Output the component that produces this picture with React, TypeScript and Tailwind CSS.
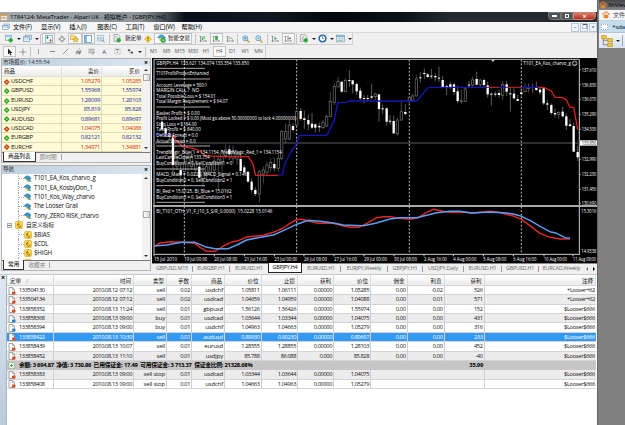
import type { ReactNode } from "react";

/* ---------- icons ---------- */

type IconName =
  | "newChart" | "profiles" | "market" | "crosshair" | "data" | "navigator" | "tester"
  | "order" | "warning" | "expert" | "bars" | "candles" | "line" | "zoomIn" | "zoomOut"
  | "scroll" | "shift" | "indicators" | "clock" | "template" | "cursor" | "cross"
  | "vline" | "hline" | "trend" | "channel" | "fibo" | "text" | "label" | "arrows"
  | "ea" | "fx" | "app" | "sell" | "buy" | "balance" | "paw" | "tree";

const plus = <path d="M10 7v8M6 11h8" stroke="#1faa2c" strokeWidth="3.4" />;
const axes = <path d="M3 2v12M1 12h14M1 4l2-2 2 2M13 10l2 2-2 2" stroke="#555" />;

const glyphs: Record<IconName, ReactNode> = {
  newChart: <><rect x="1" y="2" width="11" height="9" fill="#e8f2fa" stroke="#6d94b0" /><path d="M2 4h9" stroke="#8ab0cb" strokeWidth="2" />{plus}</>,
  profiles: <><rect x="4" y="2" width="11" height="8" fill="#d5e7f5" stroke="#5c88ac" /><rect x="1" y="5" width="11" height="8" fill="#c4dcf0" stroke="#5c88ac" /><path d="M2 11h9" stroke="#f7fbff" strokeWidth="2" /></>,
  market: <><rect x="1" y="1" width="14" height="14" fill="#f2faff" stroke="#6fa5cc" strokeWidth="1.5" /><path d="M5 3v5M3 5l2-2 2 2" stroke="#15a32b" strokeWidth="2" /><path d="M11 8v5M9 11l2 2 2-2" stroke="#d35a20" strokeWidth="2" /></>,
  crosshair: <><circle cx="8" cy="8" r="4.5" stroke="#666" /><path d="M8 1v5M8 10v5M1 8h5M10 8h5" stroke="#666" strokeWidth="1.4" /></>,
  data: <><path d="M1 2h5l1 2h4v6H1z" fill="#ffe28a" stroke="#c0962c" /><path d="M10 5l1.600 3.200 3.400.4-2.500 2.300.7 3.500-3.200-1.800-3.200 1.800.7-3.500L5 8.600l3.400-.4z" fill="#ffd23b" stroke="#b98c1c" /></>,
  navigator: <><rect x="1" y="1" width="14" height="14" fill="#fff" stroke="#4e93cd" strokeWidth="1.6" /><path d="M4 1v14" stroke="#63a6dc" strokeWidth="3" /></>,
  tester: <><rect x="1" y="1" width="12" height="11" fill="#eaf3fa" stroke="#7ea3bf" /><path d="M3 9V5M6 9V3M9 9V5" stroke="#6389a6" /><circle cx="10" cy="9" r="3" fill="#d9edfb" stroke="#5e8db3" /><path d="M12 11l3 4" stroke="#b98b3c" strokeWidth="2" /></>,
  order: <><path d="M2 1h7l3 3v9H2z" fill="#fff" stroke="#666" /><path d="M4 5h5M4 7h5" stroke="#888" />{plus}</>,
  warning: <><path d="M8 1l7 7-7 7-7-7z" fill="#ffd640" stroke="#c59312" /><path d="M8 4v5M8 10.5v2" stroke="#604600" strokeWidth="1.8" /></>,
  expert: <><path d="M1 6q7-9 14 0l-4 2H5z" fill="#4aa3d8" stroke="#2f7ba9" /><path d="M4 7h8v4q-4 4-8 0z" fill="#f3cf5a" /><circle cx="11" cy="11" r="4.5" fill="#22a833" /><path d="M10 9l3 2-3 2z" fill="#fff" /></>,
  bars: <>{axes}<path d="M7 4v6M10 2v7M10 4h2M7 8H5" stroke="#17a028" strokeWidth="1.5" /></>,
  candles: <>{axes}<path d="M9 1v10" stroke="#139423" /><rect x="7" y="3" width="4" height="6" fill="#20b534" stroke="#139423" /></>,
  line: <>{axes}<path d="M4 9q3-7 6-3t4 2" stroke="#2ba43a" strokeWidth="1.3" /></>,
  zoomIn: <><circle cx="6.5" cy="6.5" r="5" fill="#dff0fb" stroke="#4c8dc0" strokeWidth="1.6" /><path d="M4 6.5h5M6.5 4v5" stroke="#2c73ac" strokeWidth="1.5" /><path d="M10 10l5 5" stroke="#c99a2e" strokeWidth="2.6" /></>,
  zoomOut: <><circle cx="6.5" cy="6.5" r="5" fill="#dff0fb" stroke="#4c8dc0" strokeWidth="1.6" /><path d="M4 6.5h5" stroke="#2c73ac" strokeWidth="1.5" /><path d="M10 10l5 5" stroke="#c99a2e" strokeWidth="2.6" /></>,
  scroll: <>{axes}<path d="M7 4l5 3-5 3z" fill="#22a833" /></>,
  shift: <>{axes}<path d="M8 1v10" stroke="#555" strokeWidth="1.4" /><path d="M13 4L9 7l4 2z" fill="#444" /></>,
  indicators: <><path d="M1 1h8l3 3v9H1z" fill="#f5f5f5" stroke="#777" /><path d="M4 10q1-7 4-6" stroke="#555" />{plus}</>,
  clock: <><circle cx="8" cy="8" r="6" fill="#fff" stroke="#2468ab" strokeWidth="2.6" /><path d="M8 4v4h3" stroke="#333" /></>,
  template: <><rect x="1" y="2" width="14" height="12" fill="#e5f0f8" stroke="#5e8db0" /><path d="M1 4h14" stroke="#5d9bc9" strokeWidth="2" /><path d="M3 9l3-2 3 2 4-2" stroke="#7d93a3" /><path d="M3 12l3-1 3 1 4-2" stroke="#39a04a" /></>,
  cursor: <path d="M4 1v12l3-3 2 5 2-1-2-4h4z" fill="#222" />,
  cross: <path d="M8 1v14M1 8h14" stroke="#555" />,
  vline: <path d="M8 2v12" stroke="#666" strokeWidth="1.3" />,
  hline: <path d="M2 8h12" stroke="#555" strokeWidth="1.5" />,
  trend: <path d="M2 14L14 2" stroke="#555" strokeWidth="1.3" />,
  channel: <path d="M1 12L11 1M4 15L15 4M3 8h11M2 11h9M10 10v5M10 10h4M10 12h3" stroke="#555" strokeWidth="1.2" />,
  fibo: <path d="M1 3h14M1 7h14M1 11h8M11 10v5M11 10h4M11 12h3" stroke="#666" strokeWidth="1.3" />,
  text: <text x="3" y="13" fontSize="14" fill="#444">A</text>,
  label: <><rect x="2" y="2" width="12" height="12" stroke="#888" strokeDasharray="2 1" /><text x="4.500" y="12.500" fontSize="11" fill="#444">T</text></>,
  arrows: <><path d="M1 5l4-3 3 4-3 1z" fill="#333" /><path d="M8 9l6-1-2 6z" fill="#333" /><path d="M4 8l5 4" stroke="#333" /></>,
  ea: <><path d="M4 7h9v4q-4 4-8 1z" fill="#e7bd45" /><path d="M0 6q7-9 14 0l-3 4-6-2z" fill="#3c98cc" stroke="#2b7299" /><path d="M9 8l6 6-6-1z" fill="#2b88b8" /></>,
  fx: <><rect x="1" y="1" width="14" height="14" rx="2" fill="#ffd94e" stroke="#c99713" /><path d="M9 3q-3 0-3 4v6M4 7h5M8 9l5 5M13 9l-5 5" stroke="#7b5800" strokeWidth="1.3" /></>,
  app: <><rect x="1" y="3" width="14" height="12" fill="#f6ead8" stroke="#c48b55" /><path d="M1 4h14" stroke="#d48f4b" strokeWidth="3" /><path d="M4 12V8M8 12V7M12 12V9" stroke="#7d8f9c" strokeWidth="1.6" /></>,
  sell: <><path d="M2 1h7l4 4v10H2z" fill="#fff" stroke="#777" strokeWidth="1.3" /><path d="M9 1v4h4" stroke="#777" /><rect x="8" y="9" width="7" height="6" rx="2" fill="#dd4b25" /></>,
  buy: <><path d="M2 1h7l4 4v10H2z" fill="#fff" stroke="#777" strokeWidth="1.3" /><path d="M9 1v4h4" stroke="#777" /><rect x="8" y="9" width="7" height="6" rx="2" fill="#2d83c9" /></>,
  balance: <><path d="M2 1h9l3 3v11H2z" fill="#f5fff5" stroke="#6b8b6b" /><path d="M8 5v6M5 8h6" stroke="#1f9f2d" strokeWidth="2.4" /></>,
  paw: <><ellipse cx="8" cy="11" rx="5" ry="4" fill="#e8852a" /><path d="M2 4l1 4M6 1v4M10 1v4M14 4l-1 4" stroke="#e8852a" strokeWidth="2.6" /></>,
  tree: <><path d="M3 5v8h6M3 7h6" stroke="#666" /><rect x="1" y="1" width="6" height="4" fill="#f4ce42" stroke="#b98d17" /><rect x="9" y="5" width="6" height="4" fill="#f4ce42" stroke="#b98d17" /><rect x="9" y="11" width="6" height="4" fill="#f4ce42" stroke="#b98d17" /></>,
};

function Icon({ name, className = "size-[8px]" }: { name: IconName; className?: string }) {
  return (
    <svg viewBox="0 0 16 16" fill="none" className={`shrink-0 ${className}`}>
      {glyphs[name]}
    </svg>
  );
}

function Cell({ children, on, className = "w-[13.2px]" }: { children: ReactNode; on?: boolean; className?: string }) {
  return (
    <div
      className={`flex h-[11px] shrink-0 items-center justify-center ${className} ${
        on ? "border border-[#c3c3c3] bg-[#fafafa]" : ""
      }`}
    >
      {children}
    </div>
  );
}

function Caret() {
  return (
    <div className="flex w-[5px] shrink-0 justify-center">
      <i className="size-0 border-x-2 border-t-2 border-x-transparent border-t-[#222]" />
    </div>
  );
}

function Sep() {
  return <div className="mx-px h-[10px] w-px shrink-0 bg-[#c4c4c4]" />;
}

/* ---------- title, menu and toolbars ---------- */

function TitleBar() {
  return (
    <div className="flex h-[10px] items-start bg-[linear-gradient(90deg,#a3aaae_0,#8d9499_140px,#4a5259_165px,#071018_185px,#101922_270px,#02070c_330px,#0a1118_400px,#242a30_450px)]">
      <Icon name="app" className="mt-px size-[8px]" />
      <span className="ml-[2px] w-[160px] text-[6px] leading-[10px] tracking-[-0.060px] whitespace-nowrap text-black">
        1784124: MetaTrader - Alpari UK - 模拟帐户 - [GBPJPY,H4]
      </span>
      <div className="mr-px ml-auto flex h-[8px] text-white">
        <span className="flex w-[13px] items-center justify-center rounded-bl-sm border border-[#777] bg-[#4e5357]"><i className="h-[2px] w-[5px] bg-white" /></span>
        <span className="flex w-[12px] items-center justify-center border border-[#777] bg-[#4e5357]"><i className="size-[4px] border border-white" /></span>
        <span className="flex w-[23px] items-center justify-center rounded-br-sm border border-[#c68278] bg-linear-to-b from-[#d87e6d] to-[#b92b12] text-[7px] leading-none font-bold">×</span>
      </div>
    </div>
  );
}

const menus = ["文件(F)", "显示(V)", "插入(I)", "图表(C)", "工具(T)", "窗口(W)", "帮助(H)"];

function MenuBar() {
  return (
    <div className="flex h-[11px] items-center border-b border-[#d9d9d9] bg-[#f5f5f5]">
      <Icon name="profiles" className="ml-[2px] size-[8px]" />
      <div className="ml-[3px] flex text-[6.200px] leading-none text-black">
        {menus.map((m) => (
          <span key={m} className="w-[28.100px] tracking-[-0.100px] whitespace-nowrap">
            {m}
          </span>
        ))}
      </div>
      <div className="ml-auto flex gap-px">
        {["–", "❐", "×"].map((g) => (
          <span key={g} className="flex h-[9px] w-[8px] items-center justify-center border border-[#b6c9da] bg-[#eef6fc] text-[6px] leading-none text-[#335]">
            {g}
          </span>
        ))}
      </div>
    </div>
  );
}

function StandardBar() {
  return (
    <div className="flex h-[12px] w-[353px] items-center border-r border-b border-[#cfcfcf] pl-[3px]">
      <Cell className="w-[13px]"><Icon name="newChart" className="size-[9px]" /></Cell>
      <Caret />
      <Cell className="w-[13px]"><Icon name="profiles" className="size-[9px]" /></Cell>
      <Caret />
      <Sep />
      <Cell on><Icon name="market" /></Cell>
      <Cell><Icon name="crosshair" /></Cell>
      <Cell on><Icon name="data" className="size-[9px]" /></Cell>
      <Cell on><Icon name="navigator" /></Cell>
      <Cell><Icon name="tester" /></Cell>
      <Sep />
      <Cell className="w-[14px]"><Icon name="order" className="size-[9px]" /></Cell>
      <span className="w-[17px] text-[5.500px] whitespace-nowrap text-black">新定单</span>
      <Cell className="w-[13px]"><Icon name="warning" className="size-[8px]" /></Cell>
      <Cell on className="w-[38px] gap-[2px]">
        <Icon name="expert" className="size-[9px]" />
        <span className="text-[5.500px] whitespace-nowrap text-black">智能交易</span>
      </Cell>
      <div className="w-[2px]" />
      <Sep />
      <Cell className="w-[13px]"><Icon name="bars" /></Cell>
      <Cell on><Icon name="candles" /></Cell>
      <Cell><Icon name="line" /></Cell>
      <Sep />
      <Cell><Icon name="zoomIn" /></Cell>
      <Cell><Icon name="zoomOut" /></Cell>
      <Sep />
      <Cell><Icon name="scroll" /></Cell>
      <Cell on><Icon name="shift" /></Cell>
      <Sep />
      <Cell className="w-[13px]"><Icon name="indicators" className="size-[9px]" /></Cell>
      <Caret />
      <Cell className="w-[13px]"><Icon name="clock" className="size-[9px]" /></Cell>
      <Caret />
      <Cell className="w-[13px]"><Icon name="template" className="size-[9px]" /></Cell>
      <Caret />
    </div>
  );
}

const tools: IconName[] = ["vline", "hline", "trend", "channel", "fibo", "text", "label", "arrows"];
const periods = ["M1", "M5", "M15", "M30", "H1", "H4", "D1", "W1", "MN"];

function LineBar() {
  return (
    <div className="flex h-[13px] w-[266px] items-center border-r border-[#cfcfcf] pl-[3px]">
      <Cell on><Icon name="cursor" /></Cell>
      <Cell><Icon name="cross" /></Cell>
      <Sep />
      {tools.map((t) => (
        <Cell key={t} className="w-[13.100px]"><Icon name={t} className="size-[7px]" /></Cell>
      ))}
      <Caret />
      <div className="w-[2px]" />
      <Sep />
      {periods.map((p) => (
        <Cell key={p} on={p === "H4"} className="w-[13.100px]">
          <span className="text-[5.200px] tracking-[-0.150px] text-[#555]">{p}</span>
        </Cell>
      ))}
    </div>
  );
}

/* ---------- left column ---------- */

function PanelTitle({ children }: { children: ReactNode }) {
  return (
    <div className="flex h-[8px] items-center justify-between bg-linear-to-r from-[#bfd0e0] to-[#dbe6f0] pr-[2px] pl-[1px] text-[5.600px] leading-none text-[#333]">
      <span className="tracking-[-0.050px]">{children}</span>
      <span className="text-[7px] font-bold text-black">×</span>
    </div>
  );
}

function ScrollBar({ thumb }: { thumb: string }) {
  return (
    <div className="flex w-[8px] shrink-0 flex-col items-center bg-[#f2f2f2] py-[3px]">
      <i className="size-0 border-x-2 border-b-2 border-x-transparent border-b-[#333]" />
      <div className={`h-[7px] w-[7px] border border-[#aaa] bg-linear-to-r from-white to-[#d8d8d8] ${thumb}`} />
      <i className="mt-auto size-0 border-x-2 border-t-2 border-x-transparent border-t-[#333]" />
    </div>
  );
}

function PanelTabs({ items }: { items: [string, string] }) {
  return (
    <div className="flex h-[10px] items-start border-t border-[#777] bg-[#f1f1f1] text-[5.700px] leading-[9px]">
      <span className="-mt-px ml-[1px] h-[10px] border-r border-b border-l border-[#333] bg-white px-[4px] text-black">{items[0]}</span>
      <span className="px-[4px] text-[#888]">{items[1]}</span>
      <span className="mt-px h-[6px] w-px bg-[#aaa]" />
    </div>
  );
}

const quotes = [
  { symbol: "USDCHF", bid: "1.05279", ask: "1.05285", up: false },
  { symbol: "GBPUSD", bid: "1.55968", ask: "1.55974", up: true },
  { symbol: "EURUSD", bid: "1.28099", ask: "1.28103", up: true },
  { symbol: "USDJPY", bid: "85.819", ask: "85.828", up: true },
  { symbol: "AUDUSD", bid: "0.89681", ask: "0.89697", up: true },
  { symbol: "USDCAD", bid: "1.04075", ask: "1.04088", up: false },
  { symbol: "EURGBP", bid: "0.82121", ask: "0.82132", up: true },
  { symbol: "EURCHF", bid: "1.34871", ask: "1.34881", up: false },
];

function MarketWatch() {
  return (
    <div className="flex h-[105px] flex-col border border-[#b5b5b5] bg-white">
      <PanelTitle>市场报价: 14:55:54</PanelTitle>
      <div className="flex h-[86px]">
        <div className="flex-1">
          <div className="grid h-[11px] grid-cols-[59px_40px_1fr] items-center border-b border-[#ddd] bg-linear-to-b from-white to-[#ececec] text-[5.500px] text-[#111]">
            <span className="pl-[2px]">商品</span>
            <span className="border-l border-[#ddd] pr-[2px] text-right">卖价</span>
            <span className="border-l border-[#ddd] pr-[2px] text-right">买价</span>
          </div>
          {quotes.map((q) => (
            <div key={q.symbol} className="grid h-[9.360px] grid-cols-[59px_40px_1fr] border-b border-[#dcd9b8] bg-[#fffbd6] text-[6px] leading-[9px]">
              <span className="flex items-center gap-[3px] pl-[2.500px] tracking-[-0.250px] text-[#111]">
                <i className={`size-[3.500px] rotate-45 border ${q.up ? "border-[#2a9b2a] bg-[#7ddb70]" : "border-[#c23c18] bg-[#f29456]"}`} />
                {q.symbol}
              </span>
              <span className={`border-l border-[#dcd9b8] pr-[1px] text-right tracking-[-0.400px] ${q.up ? "text-[#1b2ca0]" : "text-[#d2301a]"}`}>{q.bid}</span>
              <span className={`border-l border-[#dcd9b8] pr-[1px] text-right tracking-[-0.400px] ${q.up ? "text-[#1b2ca0]" : "text-[#d2301a]"}`}>{q.ask}</span>
            </div>
          ))}
        </div>
        <ScrollBar thumb="mt-[3px]" />
      </div>
      <PanelTabs items={["商品列表", "即时图"]} />
    </div>
  );
}

const experts = ["T101_EA_Kos_charvo_g", "T101_EA_KosbyDon_1", "T101_Kos_Way_charvo", "The Looser Grail", "Tony_ZERO RISK_charvo"];
const customs = ["$BIAS", "$CDL", "$HIGH", "$LOW"];

function TreeRow({ icon, children }: { icon: IconName; children: ReactNode }) {
  return (
    <div className="ml-[16px] flex h-[9.360px] items-center border-l border-dotted border-[#aaa]">
      <i className="w-[5px] border-t border-dotted border-[#aaa]" />
      <Icon name={icon} />
      <span className="ml-[2px] text-[6.200px] leading-none tracking-[-0.200px] whitespace-nowrap">{children}</span>
    </div>
  );
}

function Navigator() {
  return (
    <div className="flex h-[106px] flex-col border border-[#b5b5b5] bg-white text-[#111]">
      <PanelTitle>导航</PanelTitle>
      <div className="flex h-[88px] overflow-hidden">
        <div className="flex-1 overflow-hidden">
          {experts.map((e) => (
            <TreeRow key={e} icon="ea">{e}</TreeRow>
          ))}
          <div className="flex h-[9.360px] items-center pl-[5px]">
            <i className="mr-[3px] flex size-[5px] items-center justify-center border border-[#aaa] bg-white"><b className="h-px w-[3px] bg-[#777]" /></i>
            <Icon name="fx" />
            <span className="ml-[3px] text-[5.600px] leading-none">自定义指标</span>
          </div>
          {customs.map((c) => (
            <TreeRow key={c} icon="fx">{c}</TreeRow>
          ))}
        </div>
        <ScrollBar thumb="mt-[32px]" />
      </div>
      <PanelTabs items={["常用", "收藏夹"]} />
    </div>
  );
}

/* ---------- chart, drawn on a grid of three units per pixel ---------- */

// x, high, low, body top, body bottom, bear (1) or bull (0)
const candles = [
  [36, 190, 225, 200, 222, 1], [47, 210, 245, 220, 240, 1], [58, 225, 260, 235, 245, 1], [69, 240, 352, 240, 330, 1],
  [81, 300, 345, 318, 334, 0], [92, 330, 385, 345, 360, 1], [103, 300, 380, 326, 350, 0], [114, 285, 350, 300, 330, 0],
  [125, 285, 345, 303, 335, 0], [137, 315, 358, 325, 345, 0], [148, 325, 370, 335, 368, 1], [159, 330, 395, 350, 372, 0],
  [170, 320, 380, 335, 355, 0], [181, 320, 360, 328, 352, 0], [193, 305, 370, 318, 345, 0], [205, 300, 400, 312, 324, 0],
  [216, 283, 350, 290, 320, 0], [227, 268, 310, 285, 302, 0], [238, 270, 315, 283, 298, 1], [249, 272, 325, 290, 310, 0],
  [261, 285, 330, 298, 312, 0], [272, 295, 350, 312, 348, 1], [283, 330, 355, 337, 352, 1], [294, 350, 383, 350, 380, 1],
  [305, 370, 413, 380, 405, 1], [316, 397, 423, 405, 417, 1], [328, 345, 442, 350, 417, 0], [340, 335, 385, 345, 357, 0],
  [351, 320, 360, 330, 352, 0], [362, 310, 350, 322, 338, 0], [373, 310, 350, 327, 340, 1], [385, 298, 350, 310, 340, 0],
  [395, 225, 315, 230, 310, 0], [407, 205, 265, 230, 252, 0], [418, 195, 255, 210, 252, 0], [429, 205, 230, 213, 225, 1],
  [440, 165, 212, 170, 210, 0], [452, 160, 197, 168, 192, 1], [463, 167, 222, 190, 195, 1], [475, 178, 225, 195, 208, 1],
  [486, 174, 222, 206, 218, 1], [496, 205, 232, 208, 218, 1], [508, 203, 231, 213, 217, 1], [519, 195, 222, 203, 218, 0],
  [530, 179, 216, 185, 213, 0], [541, 110, 186, 139, 185, 0], [553, 85, 150, 94, 142, 0], [564, 66, 96, 80, 96, 0],
  [575, 80, 113, 80, 110, 1], [586, 70, 112, 76, 110, 0], [598, 45, 96, 75, 78, 1], [608, 75, 115, 76, 88, 1],
  [620, 83, 120, 87, 109, 1], [631, 98, 137, 107, 130, 1], [642, 120, 145, 129, 132, 1], [653, 120, 138, 129, 132, 1],
  [665, 86, 133, 124, 128, 1], [676, 113, 135, 117, 125, 0], [687, 118, 200, 118, 162, 1], [698, 148, 176, 160, 163, 1],
  [710, 158, 212, 160, 200, 1], [720, 180, 210, 197, 200, 1], [731, 182, 237, 198, 235, 1], [742, 188, 243, 195, 236, 0],
  [754, 139, 197, 170, 195, 0], [766, 148, 180, 171, 177, 1], [778, 125, 150, 127, 139, 0], [788, 116, 137, 123, 137, 0],
  [799, 61, 123, 72, 123, 0], [811, 52, 83, 67, 70, 1], [823, 40, 72, 54, 57, 1], [833, 53, 68, 58, 66, 1],
  [844, 42, 72, 62, 65, 1], [856, 55, 78, 63, 67, 1], [867, 35, 81, 68, 71, 1], [878, 63, 100, 75, 97, 1],
  [890, 90, 120, 93, 96, 1], [901, 81, 102, 88, 98, 1], [912, 83, 120, 88, 111, 1], [923, 92, 145, 109, 138, 1],
  [934, 105, 148, 137, 140, 0], [946, 98, 140, 102, 139, 0], [957, 78, 97, 89, 92, 1], [968, 65, 97, 75, 90, 0],
  [980, 50, 90, 72, 89, 1], [991, 72, 97, 75, 88, 0], [1002, 70, 95, 75, 90, 1], [1013, 80, 128, 91, 118, 1],
  [1024, 112, 152, 116, 119, 1], [1036, 110, 125, 116, 119, 1], [1047, 105, 128, 114, 120, 1], [1058, 78, 135, 88, 121, 0],
  [1070, 78, 123, 88, 110, 1], [1081, 97, 170, 115, 118, 1], [1092, 100, 133, 116, 130, 1], [1103, 120, 138, 132, 138, 1],
  [1114, 96, 122, 112, 117, 1], [1125, 85, 112, 98, 110, 0], [1136, 85, 113, 97, 100, 0], [1148, 86, 113, 96, 99, 1],
  [1159, 80, 108, 98, 105, 1], [1170, 98, 120, 104, 112, 1], [1181, 98, 150, 100, 145, 1], [1192, 135, 165, 145, 149, 1],
  [1204, 145, 180, 150, 174, 1], [1215, 160, 187, 174, 178, 1], [1226, 168, 192, 172, 178, 0], [1238, 155, 188, 170, 184, 1],
  [1249, 175, 225, 184, 212, 1], [1260, 192, 215, 208, 213, 1], [1271, 202, 290, 213, 290, 1], [1283, 272, 318, 291, 307, 1],
];

// text, vertical centre, drawn width
const comments: [string, number, number][] = [
  ["GBPJPY,H4  133.621 134.074 133.354 133.850", 24, 278],
  ["T101ProfitProtectEnhanced", 55, 157],
  ["Account Leverage = 500:1", 89, 153],
  ["MARGIN CALL ?  NO", 105, 128],
  ["Total Possible Loss = $ 154.01", 122, 178],
  ["Total Margin Requirement = $ 64.07", 139, 214],
  ["Basket Profit = $ 0.00", 173, 130],
  ["Profit Locked = $ 0.00 (Must go above 50.00000000 to lock 4.00000000)", 189, 420],
  ["Stop Loss = $ -84.00", 206, 121],
  ["Take Profit = $ 840.00", 223, 133],
  ["Default Spread = 0.0", 240, 124],
  ["Actual Spread = 0.0", 257, 118],
  ["TrendMagic_Blue_1 = 134.1154, TrendMagic_Red_1 = 134.1154", 290, 376],
  ["LastCandleClose = 133.754", 307, 160],
  ["BuyCondition1 = 0, SellCondition1 = 0", 324, 228],
  ["MACD_Main = 0.0223, MACD_Signal = 0.1461", 358, 280],
  ["BuyCondition2 = 0, SellCondition2 = 1", 375, 228],
  ["BI_Red = 15.0125, BI_Blue = 15.0162", 408, 226],
  ["BuyCondition3 = 0, SellCondition3 = 1", 425, 228],
  ["BI_T101_OTH_V1_F_(10_S_S/R_0.0000)  15.0228 15.0146", 468, 348],
];

const rules = [[40, 165], [72, 180], [156, 180], [273, 180], [342, 165], [392, 165], [442, 165]];

const prices: [string, number][] = [
  ["137.610", 44], ["136.830", 89], ["136.070", 133], ["135.290", 178], ["134.530", 223],
  ["132.990", 313], ["132.230", 358], ["131.450", 403], ["130.690", 445],
];

const times: [string, number][] = [
  ["15 Jul 2010", 12], ["19 Jul 00:00", 103], ["20 Jul 08:00", 193], ["21 Jul 16:00", 283], ["23 Jul 00:00", 373],
  ["26 Jul 08:00", 462], ["27 Jul 16:00", 552], ["29 Jul 00:00", 642], ["30 Jul 08:00", 732], ["2 Aug 16:00", 822],
  ["4 Aug 00:00", 910], ["5 Aug 08:00", 1000], ["6 Aug 16:00", 1090], ["10 Aug 00:00", 1182], ["11 Aug 08:00", 1269],
];

function Chart() {
  return (
    <svg viewBox="6 9 1335 615" className="block h-[205px] w-[445px] bg-black text-[18px]" fill="none">
      <path d="M12 598V13H1288V598" stroke="#ccc" strokeWidth="3" />
      <path d="M12 598H1290" stroke="#ccc" strokeWidth="3" />
      <path d="M12 264H1288" stroke="#3c4044" strokeWidth="4" />
      <path d="M103 14V598M440 14V598M778 14V598M1114 14V598" stroke="#bbb" strokeWidth="3" strokeDasharray="6 5" />

      {candles.map(([x, high, low, top, bottom, bear]) => (
        <g key={x}>
          <path d={`M${x} ${high}V${low}`} stroke={bear ? "#8a8a8a" : "#6c6c6c"} strokeWidth="2" />
          <rect
            x={x - 3.5}
            y={top}
            width="7"
            height={bottom - top}
            fill={bear ? "#fff" : "#000"}
            stroke={bear ? "none" : "#777"}
            strokeWidth="2"
          />
        </g>
      ))}

      <g strokeWidth="4">
        <path d="M14 238H50L66 241" stroke="#1616a8" />
        <path d="M66 241L80 258L97 275L130 280L150 288L165 302L215 305H295L308 325L317 361H385" stroke="#d81e1e" />
        <path
          d="M385 361L397 359L407 320L410 315L428 282L437 272L448 241H530L541 220L553 195L563 143L588 142L598 138H800L835 97H1013"
          stroke="#1616b4"
        />
        <path d="M1013 97H1047M1070 97H1114" stroke="#b01a2a" />
        <path d="M1047 97H1070M1114 97H1165" stroke="#1616b4" />
        <path d="M1165 97H1181L1204 108L1215 127L1238 128L1249 135L1260 157H1271L1283 223" stroke="#d81e1e" />
      </g>

      <path d="M9 453H1341" stroke="#aaa" strokeWidth="6" />
      <g strokeWidth="4.5" strokeLinejoin="round">
        <path
          d="M12 575L30 564L65 560L95 562L135 565L150 577L170 589H195L210 580L225 570L248 560L265 557L290 546L340 541L375 530L400 519L420 505L440 494L455 493L475 498L505 505H550L580 513L600 517H625L650 505L680 488L700 485H720L750 490L780 493L805 488L830 472L850 463L880 469L900 472L930 471L970 474L1020 469L1045 472L1065 477L1090 483L1114 493L1140 512L1170 535L1200 547L1230 552H1260"
          stroke="#e02626"
        />
        <path
          d="M12 573L50 570L95 562H135L165 575L195 581H235L260 570L290 555L320 549L370 540L400 527L440 508L475 496L510 499L550 504L580 510L640 512L680 504L720 492L750 488H800L830 481L860 473L900 469H930L965 474L1020 471L1060 473L1090 477L1114 484L1140 496L1170 514L1200 530L1220 535L1245 548L1260 549"
          stroke="#5b9df0"
        />
      </g>

      <path d="M1023 14h12l-6 7z" fill="#ccc" />
      {rules.map(([y, end]) => (
        <path key={y} d={`M19 ${y}H${end}`} stroke="#ccc" strokeWidth="2.5" />
      ))}
      <g fill="#fff" stroke="none">
        {comments.map(([text, y, width]) => (
          <text key={y} x="19" y={y + 6} textLength={width} lengthAdjust="spacingAndGlyphs" xmlSpace="preserve">
            {text}
          </text>
        ))}
        <text x="1120" y="31" textLength="143" lengthAdjust="spacingAndGlyphs">T101_EA_Kos_charvo_g</text>
        {prices.map(([text, y]) => (
          <text key={y} x="1295" y={y + 6} textLength="44" lengthAdjust="spacingAndGlyphs">{text}</text>
        ))}
        <rect x="1290" y="256" width="51" height="16" fill="#fff" />
        <text x="1295" y="270" fill="#111" textLength="44" lengthAdjust="spacingAndGlyphs">133.850</text>
        <text x="1294" y="473" textLength="45" lengthAdjust="spacingAndGlyphs">15.3016</text>
        <text x="1294" y="594" textLength="45" lengthAdjust="spacingAndGlyphs">14.9338</text>
        {times.map(([text, x]) => (
          <text key={x} x={x} y="617" textLength="69" lengthAdjust="spacingAndGlyphs">{text}</text>
        ))}
      </g>
      <circle cx="1274" cy="25" r="7" stroke="#eee" strokeWidth="2" />
      <path d="M1270 27q4 4 8 0M1271 22v2M1277 22v2" stroke="#eee" strokeWidth="1.5" />
      {prices.map(([, y]) => (
        <path key={y} d={`M1288 ${y}h5`} stroke="#ccc" strokeWidth="2" />
      ))}
      {times.map(([, x]) => (
        <path key={x} d={`M${x} 598v6`} stroke="#ccc" strokeWidth="3" />
      ))}
    </svg>
  );
}

const chartTabs = [
  { name: "GBPUSD,M15", w: "w-[41px]" },
  { name: "EURGBP,H1", w: "w-[37px]" },
  { name: "EURUSD,H1", w: "w-[38px]" },
  { name: "GBPJPY,H4", w: "w-[34px]", active: true },
  { name: "EURUSD,H1", w: "w-[39px]" },
  { name: "EURJPY,Weekly", w: "w-[47px]" },
  { name: "GBPJPY,H1", w: "w-[35px]" },
  { name: "USDJPY,Daily", w: "w-[41px]" },
  { name: "EURUSD,H1", w: "w-[38px]" },
  { name: "GBPUSD,H1", w: "w-[37px]" },
  { name: "EURCAD,Weekly", w: "w-[45px]" },
];

function ChartTabs() {
  return (
    <div className="flex h-[10px] items-center border-t border-[#888] bg-[#f0f0f0] text-[5.400px] leading-none tracking-[-0.200px] text-[#666]">
      {chartTabs.map((t, i) => (
        <span
          key={i}
          className={`flex shrink-0 items-center justify-center whitespace-nowrap ${t.w} ${
            t.active
              ? "-mt-px h-[10px] border border-t-0 border-[#222] bg-white text-black"
              : `h-[6px] ${i === 2 || i === 10 ? "" : "border-r border-[#999]"}`
          }`}
        >
          {t.name}
        </span>
      ))}
      <span className="flex flex-1 items-center justify-around">
        <i className="size-0 border-y-2 border-r-2 border-y-transparent border-r-[#777]" />
        <i className="size-0 border-y-2 border-l-2 border-y-transparent border-l-black" />
      </span>
    </div>
  );
}

/* ---------- terminal ---------- */

const headers = ["定单", "时间", "类型", "手数", "商品", "价位", "止损", "获利", "价位", "佣金", "利息", "获利", "注释"];

const orders = [
  ["133504130", "2010.08.12 07:12", "sell", "0.02", "usdchf", "1.05811", "1.06111", "0.00000", "1.05285", "0.00", "-0.02", "526", "+Looser+62"],
  ["133504134", "2010.08.12 07:12", "sell", "0.02", "usdcad", "1.04659", "1.04959", "0.00000", "1.04088", "0.00", "0.01", "571", "+Looser+62"],
  ["133858352", "2010.08.13 11:24", "sell", "0.01", "gbpusd", "1.56126", "1.56426", "0.00000", "1.55974", "0.00", "0.00", "152", "$Looser$666"],
  ["133858368", "2010.08.13 09:00", "buy", "0.01", "usdcad", "1.03644", "1.03344", "0.00000", "1.04075", "0.00", "0.00", "431", "$Looser$666"],
  ["133858394", "2010.08.13 09:00", "buy", "0.01", "usdchf", "1.04963", "1.04663", "0.00000", "1.05279", "0.00", "0.00", "316", "$Looser$666"],
  ["133858422", "2010.08.13 10:30", "sell", "0.01", "audusd", "0.89930", "0.90230", "0.00000", "0.89697", "0.00", "0.00", "233", "$Looser$666"],
  ["133858439", "2010.08.13 10:07", "sell", "0.01", "eurusd", "1.28555", "1.28855", "0.00000", "1.28103", "0.00", "0.00", "452", "$Looser$666"],
  ["133858452", "2010.08.13 11:10", "sell", "0.01", "usdjpy", "85.788", "86.088", "0.000", "85.828", "0.00", "0.00", "-40", "$Looser$666"],
];

const pending = [
  ["133858383", "2010.08.13 09:00", "sell stop", "0.01", "usdcad", "1.03344", "1.03644", "0.00000", "1.04075", "", "", "", "$Looser$666"],
  ["133858408", "2010.08.13 09:00", "sell stop", "0.01", "usdchf", "1.04663", "1.04963", "0.00000", "1.05279", "", "", "", "$Looser$666"],
];

const columns = "grid grid-cols-[47px_80px_33px_25px_33px_36.5px_36.5px_36px_37px_36.5px_37px_40px_1fr]";

function OrderRow({ cells, tone }: { cells: string[]; tone: string }) {
  return (
    <div className={`${columns} h-[9.360px] border-b border-[#d4d4d4] leading-[9px] ${tone}`}>
      {cells.map((c, i) => (
        <span
          key={i}
          className={`whitespace-nowrap ${
            i === 2 || i === 4
              ? "text-[6px] tracking-[-0.180px]"
              : i === 12
                ? "text-[5.700px] tracking-[-0.300px]"
                : "text-[5.700px] tracking-[-0.400px] [word-spacing:0.800px]"
          } ${i === 0 ? "flex items-center gap-[3px] pl-px" : "pr-[1px] text-right"} ${
            i === 12 || (c === "" && i < 11) ? "" : "border-r border-[#cfcfcf]"
          }`}
        >
          {i === 0 && <Icon name={cells[2] === "buy" ? "buy" : "sell"} />}
          {c}
        </span>
      ))}
    </div>
  );
}

function Terminal() {
  return (
    <div className="flex h-[151px] border-t border-[#c8c8c8] bg-white">
      <div className="flex w-[7px] shrink-0 justify-center border-r border-[#a9b6c2] bg-linear-to-b from-[#dfe9f2] to-[#b9cadb] text-[7px] leading-[6px] font-bold">×</div>
      <div className="flex-1 pr-px text-[#111]">
        <div className={`${columns} h-[11px] border-b border-[#d5d5d5] bg-linear-to-b from-white to-[#ececec] text-[5.500px] leading-[12px]`}>
          {headers.map((h, i) => (
            <span key={i} className={i === 0 ? "border-r border-[#ddd] pl-[3px]" : "border-r border-[#ddd] pr-[2px] text-right"}>
              {h}
              {i === 0 && <span className="ml-[5px] text-[#888]">/</span>}
            </span>
          ))}
        </div>
        {orders.map((o, i) => (
          <OrderRow key={o[0]} cells={o} tone={i === 5 ? "bg-[#3399f4] text-white" : i % 2 ? "bg-[#ececec]" : "bg-white"} />
        ))}
        <div className="flex h-[9.360px] items-center bg-[#c6c6c6] text-[5.800px] leading-none font-bold tracking-[-0.250px] whitespace-nowrap text-black">
          <Icon name="balance" className="ml-px size-[7px]" />
          <span className="ml-[4px]">余额: 3 694.87&nbsp; 净值: 3 730.86&nbsp; 已用保证金: 17.49&nbsp; 可用保证金: 3 713.37&nbsp; 保证金比例: 21328.68%</span>
          <span className="mr-[113px] ml-auto">35.99</span>
        </div>
        {pending.map((o, i) => (
          <OrderRow key={o[0]} cells={o} tone={i ? "bg-white" : "bg-[#ececec]"} />
        ))}
      </div>
    </div>
  );
}

/* ---------- neighbouring window ---------- */

function SideWindow() {
  return (
    <div className="w-[26px] shrink-0 overflow-hidden bg-[#808080] text-[6px] tracking-[-0.100px] whitespace-nowrap">
      <div className="flex h-[10px] items-center gap-[1px] bg-linear-to-b from-[#444] to-[#85898e] leading-none text-black">
        <Icon name="paw" />
        XnView
      </div>
      <div className="flex h-[11px] items-center gap-[3px] border-b border-[#c7d2dc] bg-[#f4f6fa] pl-[3px] leading-none text-[#444]">
        <Icon name="paw" />
        文件(F)
      </div>
      <div className="flex h-[11px] items-center gap-[4px] bg-[#c3dfee] pl-[2px] leading-none">
        <i className="h-[6px] w-[8px] border border-dotted border-[#9db6c6] bg-white" />
        *sda
      </div>
      <div className="flex h-[16px] items-center gap-[2px] border-t border-[#b8c6d4] bg-linear-to-b from-[#f2f6fb] to-[#d9e2ef] pl-[2px]">
        <Icon name="tree" className="size-[12px]" />
        <Caret />
        <i className="h-[11px] w-px bg-[#9aa]" />
      </div>
    </div>
  );
}

export default function App() {
  return (
    <div className="flex h-[425px] w-[625px] overflow-hidden bg-white font-['Open_Sans','Noto_Sans_CJK_SC',sans-serif]">
      <div className="w-[598px] shrink-0 border-r border-[#666]">
        <div className="h-[12px]" />
        <TitleBar />
        <MenuBar />
        <div className="h-[25px] bg-[#f0f0f0]">
          <StandardBar />
          <LineBar />
        </div>
        <div className="flex h-[214px] bg-[#f0f0f0]">
          <div className="flex w-[152px] shrink-0 flex-col gap-[2px] pr-px pl-px">
            <MarketWatch />
            <Navigator />
          </div>
          <div className="w-[445px]">
            <Chart />
            <ChartTabs />
          </div>
        </div>
        <div className="h-[2px] bg-[#f0f0f0]" />
        <Terminal />
      </div>
      <div className="w-px shrink-0 bg-[#808080]" />
      <SideWindow />
    </div>
  );
}
